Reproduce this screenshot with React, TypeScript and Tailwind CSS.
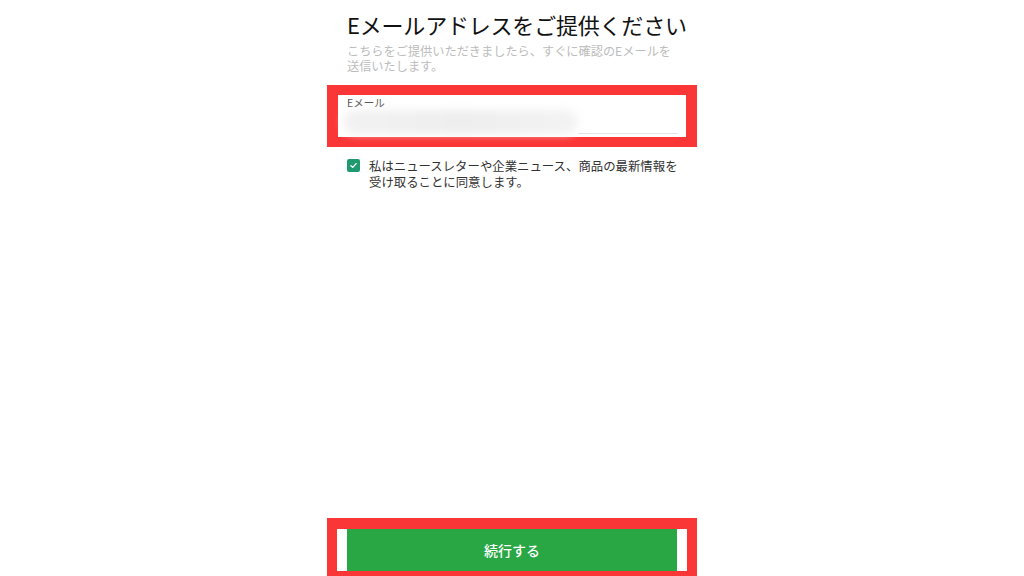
import React from "react";

const font = { fontFamily: '"Noto Sans CJK JP", "Noto Sans", sans-serif' };

export default function App() {
  return (
    <div className="w-full h-[576px] bg-white overflow-hidden" style={font}>
      <div className="mx-auto w-[370px] h-full flex flex-col">
        <h1 className="pl-[20px] pt-[10px] text-[22px] leading-[28px] font-normal text-[#111] tracking-[-0.2px]">
          Eメールアドレスをご提供ください
        </h1>
        <p className="pl-[20px] pr-[22px] mt-[6px] text-[12.2px] leading-[15px] text-[#bcbcbc]">
          こちらをご提供いただきましたら、すぐに確認のEメールを送信いたします。
        </p>

        <div className="mt-[11px] border-[#fb3636] border-y-[10px] border-x-[11px]">
          <div className="h-[42px] bg-white pl-[9px] pr-[8px] flex flex-col">
            <span className="text-[10.5px] leading-[14px] text-[#555] mt-[1px]">Eメール</span>
            <div className="flex items-end flex-1 pb-[5px]">
              <div className="w-[235px] h-[24px] -ml-[4px] rounded-[12px] bg-gradient-to-r from-[#f2f2f2] via-[#eeeeee] to-[#f3f3f3] blur-[4px]" />
              <div className="flex-1 h-px bg-[#e0e3ec]" />
            </div>
          </div>
        </div>

        <label className="mt-[11px] pl-[20px] pr-[10px] flex items-start gap-[9px]">
          <span className="mt-[1px] w-[13px] h-[13px] shrink-0 rounded-[2px] bg-[#1f9a6e] flex items-center justify-center">
            <svg viewBox="0 0 12 12" className="w-[9px] h-[9px]">
              <path d="M2.5 6.2 L5 8.5 L9.5 3.5" fill="none" stroke="white" strokeWidth="1.8" strokeLinecap="round" strokeLinejoin="round" />
            </svg>
          </span>
          <span className="text-[12.4px] leading-[16px] text-[#333]">
            私はニュースレターや企業ニュース、商品の最新情報を受け取ることに同意します。
          </span>
        </label>

        <div className="mt-auto border-[#fb3636] border-t-[11px] border-x-[10px] border-b-[5px]">
          <div className="bg-white px-[10px]">
            <button className="w-full h-[42px] bg-[#29a744] text-white text-[14px] font-medium">
              続行する
            </button>
          </div>
        </div>
      </div>
    </div>
  );
}
